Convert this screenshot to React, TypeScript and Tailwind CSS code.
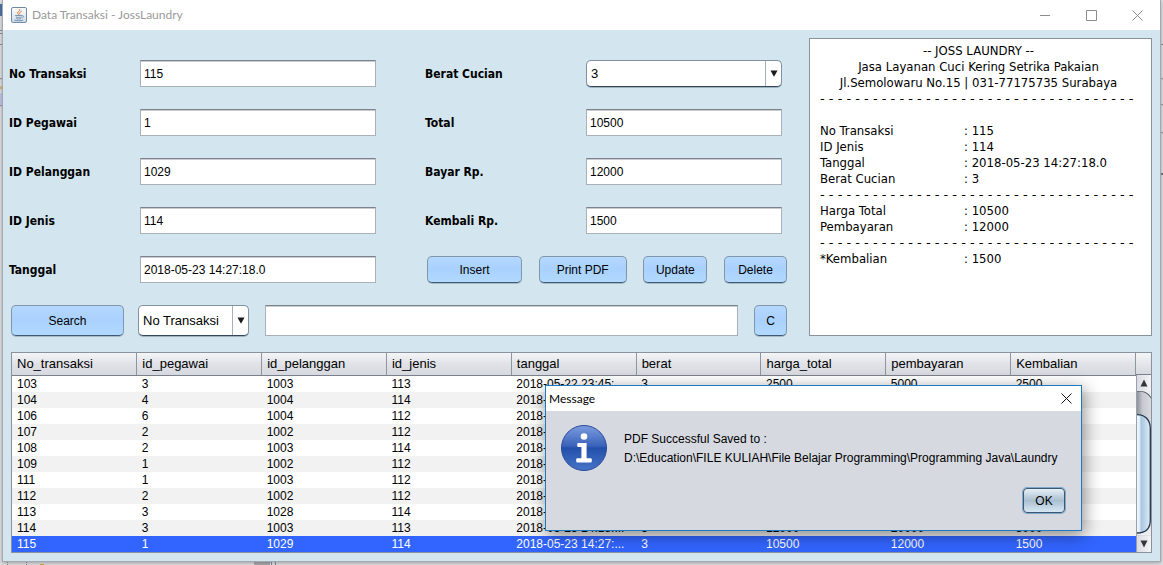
import type { ReactNode } from "react";

const ui = "font-['Liberation_Sans',Arial,sans-serif]";
const tahoma = "font-['DejaVu_Sans_Condensed','DejaVu_Sans',sans-serif]";
const segoe = "font-['Lato','Open_Sans',sans-serif]";

const columns = ["No_transaksi", "id_pegawai", "id_pelanggan", "id_jenis", "tanggal", "berat", "harga_total", "pembayaran", "Kembalian"];

const rows = [
  ["103", "3", "1003", "113", "2018-05-22 23:45:...", "3", "2500", "5000", "2500"],
  ["104", "4", "1004", "114", "2018-05-22"],
  ["106", "6", "1004", "112", "2018-05-22"],
  ["107", "2", "1002", "112", "2018-05-22"],
  ["108", "2", "1003", "114", "2018-05-22"],
  ["109", "1", "1002", "112", "2018-05-23"],
  ["111", "1", "1003", "112", "2018-05-23"],
  ["112", "2", "1002", "112", "2018-05-23"],
  ["113", "3", "1028", "114", "2018-05-23"],
  ["114", "3", "1003", "113", "2018-05-23 14:18:...", "3", "12000", "20000", "8000"],
  ["115", "1", "1029", "114", "2018-05-23 14:27:...", "3", "10500", "12000", "1500"],
];

const inputStyle =
  "min-w-0 flex-1 border border-[#a9b0b8] border-t-[#7d838c] bg-white px-[3px] text-[12px] text-black shadow-[inset_0_1px_0_#c8cbd0] outline-none";

function Field({ id, label, value }: { id: string; label: string; value: string }) {
  return (
    <div className="flex h-[27px] items-stretch">
      <Label id={id}>{label}</Label>
      <input id={id} defaultValue={value} className={inputStyle} />
    </div>
  );
}

function Label({ id, children }: { id: string; children: ReactNode }) {
  return (
    <label htmlFor={id} className={`${tahoma} flex w-[var(--label)] shrink-0 items-center text-[12px] font-bold text-black`}>
      {children}
    </label>
  );
}

function Combo({ id, options, label, className }: { id: string; options: string[]; label?: string; className: string }) {
  return (
    <div className={`relative flex overflow-hidden rounded-[5px] border border-[#8291a0] border-b-[#34475a] bg-white shadow-[0_1px_0_#9fb2c0] ${className}`}>
      <select id={id} aria-label={label} className="w-full appearance-none bg-transparent pl-1 pr-4 text-[13px] text-black outline-none">
        {options.map((o) => (
          <option key={o}>{o}</option>
        ))}
      </select>
      <span className="pointer-events-none absolute inset-y-0 right-0 flex w-4 items-center justify-center border-l border-[#a5b1bd]">
        <svg width="8" height="7" viewBox="0 0 8 7" aria-hidden="true">
          <path d="M0.5 0.5h7L4 6.8z" fill="#1b1b1f" />
        </svg>
      </span>
    </div>
  );
}

function Button({ className, children }: { className: string; children: ReactNode }) {
  return (
    <button
      type="button"
      className={`rounded-[5px] border border-[#8296ab] border-b-[#405a75] bg-linear-to-b from-[#b4d8ff] via-[#a9d1fd] to-[#b2daff] text-[12px] text-black shadow-[0_1px_0_#a6bac8] ${className}`}
    >
      {children}
    </button>
  );
}

function JavaIcon() {
  return (
    <svg width="16" height="16" viewBox="0 0 16 16" aria-hidden="true">
      <defs>
        <linearGradient id="jbg" x1="0" y1="0" x2="0" y2="1">
          <stop offset="0" stopColor="#fdfdfd" />
          <stop offset="1" stopColor="#cfdbe6" />
        </linearGradient>
      </defs>
      <rect x="0.5" y="0.5" width="15" height="15" rx="1.5" fill="url(#jbg)" stroke="#6f8ba4" />
      <path d="M9 2.4C9.6 4 6 4.800 6.600 6.200c.3.6.9.9 1.200 1.400M10.400 4.400C8.900 5 7.900 5.700 8.700 6.900" fill="none" stroke="#e8782a" strokeWidth="1" strokeLinecap="round" />
      <path d="M4.500 8.500h6M5.200 10.100c1.500.5 3.600.5 5 0M5.600 11.700c1.300.4 2.800.4 4 0M3.600 13.200c2.500.7 5.800.7 8.200 0M11 8.700c2.200-.5 2.200 1.700.2 2.100" fill="none" stroke="#5d7f9f" strokeWidth="0.800" strokeLinecap="round" />
    </svg>
  );
}

function InfoIcon() {
  return (
    <svg width="48" height="48" viewBox="0 0 48 48" aria-hidden="true">
      <defs>
        <linearGradient id="ibg" x1="0" y1="0" x2="0" y2="1">
          <stop offset="0" stopColor="#7d9de0" />
          <stop offset="0.45" stopColor="#3b63bb" />
          <stop offset="0.5" stopColor="#2350aa" />
          <stop offset="1" stopColor="#4674c8" />
        </linearGradient>
      </defs>
      <circle cx="24" cy="24" r="22.5" fill="url(#ibg)" stroke="#28489a" />
      <circle cx="24" cy="12.5" r="3.3" fill="#fff" />
      <path d="M18.400 19h8.200v15.200h4a1.200 1.200 0 0 1 1.200 1.200v1.800a1.200 1.200 0 0 1-1.200 1.200H17.400a1.200 1.200 0 0 1-1.200-1.200v-1.800a1.200 1.200 0 0 1 1.200-1.200h4V23h-3a1.200 1.200 0 0 1-1.200-1.200v-1.600A1.200 1.200 0 0 1 18.400 19z" fill="#fff" />
    </svg>
  );
}

function TitleBar() {
  return (
    <header className="flex h-[30px] items-center bg-white">
      <div className="flex flex-1 items-center gap-[5px] pl-2">
        <JavaIcon />
        <h1 className={`${segoe} text-[12px] text-[#999]`}>Data Transaksi - JossLaundry</h1>
      </div>
      <button type="button" aria-label="Minimize" className="flex h-full w-[46px] items-center justify-center">
        <svg width="11" height="11" viewBox="0 0 11 11"><path d="M0 5.5h10" stroke="#8c8c8c" /></svg>
      </button>
      <button type="button" aria-label="Maximize" className="flex h-full w-[46px] items-center justify-center">
        <svg width="11" height="11" viewBox="0 0 11 11"><path d="M.5 .5h10v10H.5z" fill="none" stroke="#8c8c8c" /></svg>
      </button>
      <button type="button" aria-label="Close" className="flex h-full w-[46px] items-center justify-center">
        <svg width="11" height="11" viewBox="0 0 11 11"><path d="M.5 .5l10 10M10.5 .5l-10 10" stroke="#8c8c8c" /></svg>
      </button>
    </header>
  );
}

function Dashes() {
  return <p className="overflow-hidden font-['DejaVu_Sans',sans-serif] text-[13px] leading-4 whitespace-nowrap">{"- ".repeat(36)}</p>;
}

function Entry({ name, value }: { name: string; value: string }) {
  return (
    <div className="flex">
      <dt className="w-[144px]">{name}</dt>
      <dd>: {value}</dd>
    </div>
  );
}

function Receipt() {
  return (
    <section className={`${tahoma} w-[343px] shrink-0 border border-[#8a929b] bg-white px-[10px] pt-1 text-[13px] leading-4 text-black`}>
      <div className="pr-1 text-center">
        <p>-- JOSS LAUNDRY --</p>
        <p>Jasa Layanan Cuci Kering Setrika Pakaian</p>
        <p>Jl.Semolowaru No.15 | 031-77175735 Surabaya</p>
      </div>
      <Dashes />
      <dl className="pt-4">
        <Entry name="No Transaksi" value="115" />
        <Entry name="ID Jenis" value="114" />
        <Entry name="Tanggal" value="2018-05-23 14:27:18.0" />
        <Entry name="Berat Cucian" value="3" />
      </dl>
      <Dashes />
      <dl>
        <Entry name="Harga Total" value="10500" />
        <Entry name="Pembayaran" value="12000" />
      </dl>
      <Dashes />
      <dl>
        <Entry name="*Kembalian" value="1500" />
      </dl>
    </section>
  );
}

function ScrollBar() {
  return (
    <div className="flex w-[15px] shrink-0 flex-col">
      <div className="h-[22px] border-b border-[#7b818a] bg-linear-to-b from-[#f4f5f7] to-[#d6d9df]" />
      <div className="flex flex-1 flex-col border-l border-[#9aa0a8] bg-linear-to-r from-[#bfc3c9] to-[#dfe1e6]">
        <button type="button" aria-label="Scroll up" className="flex h-4 items-center justify-center bg-linear-to-r from-[#d9dce1] to-[#f4f4f6]">
          <svg width="8" height="8" viewBox="0 0 8 8"><path d="M4 .5l3.500 7h-7z" fill="#33363b" /></svg>
        </button>
        <svg className="w-full flex-1" viewBox="0 0 14 144" preserveAspectRatio="none" aria-hidden="true">
          <defs>
            <linearGradient id="trk" x1="0" x2="1">
              <stop offset="0" stopColor="#8e9299" />
              <stop offset="0.4" stopColor="#c6c9cf" />
              <stop offset="1" stopColor="#d8dae0" />
            </linearGradient>
            <linearGradient id="thm" x1="0" x2="1">
              <stop offset="0" stopColor="#f2f9ff" />
              <stop offset="0.22" stopColor="#d8e9f8" />
              <stop offset="0.3" stopColor="#a9c4dc" />
              <stop offset="1" stopColor="#dcedfb" />
            </linearGradient>
          </defs>
          <path d="M0 0h14v144H0z" fill="url(#trk)" />
          <path d="M0 .5c7 0 10 1 14 7V0H0z" fill="#4c5057" />
          <path d="M3 0c6 0 9 3 11 6V0z" fill="#eceef1" />
          <path d="M0 142c7 0 13-3 13.500-13l.5 15H0z" fill="#eceef1" />
          <path d="M0 23.500c8 0 13.300 5 13.300 14v91c0 9-5 13-13.300 13z" fill="url(#thm)" />
          <path d="M0 23.500c8 0 13.300 5 13.300 14v91c0 9-5 13-13.300 13" fill="none" stroke="#26384a" strokeWidth="1.300" />
        </svg>
        <button type="button" aria-label="Scroll down" className="flex h-4 items-center justify-center bg-linear-to-r from-[#d9dce1] to-[#f4f4f6]">
          <svg width="8" height="8" viewBox="0 0 8 8"><path d="M4 7.500l3.500-7h-7z" fill="#33363b" /></svg>
        </button>
      </div>
    </div>
  );
}

function Transactions() {
  return (
    <div className="flex border border-[#8a929b] bg-white">
      <div className="min-w-0 flex-1">
        <table className="w-full table-fixed border-collapse text-left text-black">
          <thead>
            <tr className="h-[22px] bg-linear-to-b from-[#f4f5f7] via-[#e0e2e7] to-[#d6d9df] text-[13px]">
              {columns.map((c) => (
                <th key={c} scope="col" className="border-r border-b border-r-[#8f959e] border-b-[#7b818a] p-0 pl-[5px] font-normal">
                  {c}
                </th>
              ))}
            </tr>
          </thead>
          <tbody className="text-[12px]">
            {rows.map((r) => (
              <tr key={r[0]} className={r[0] === "115" ? "h-4 bg-[#3265ff] text-white" : "h-4 even:bg-[#f2f2f2]"}>
                {columns.map((c, i) => (
                  <td key={c} className="overflow-hidden p-0 pl-[5px] leading-4 whitespace-nowrap">
                    {r[i]}
                  </td>
                ))}
              </tr>
            ))}
          </tbody>
        </table>
      </div>
      <ScrollBar />
    </div>
  );
}

function MessageDialog() {
  return (
    <div
      role="dialog"
      aria-labelledby="message-title"
      className="absolute top-[385px] left-[542px] w-[537px] border border-[#1d7ac2] bg-[#d6d9e0] text-[12px] text-black shadow-[2px_4px_16px_rgba(0,0,0,0.45)]"
    >
      <div className="flex h-[25px] items-center justify-between bg-white pl-[3px]">
        <h2 id="message-title" className={`${segoe} text-[12px]`}>Message</h2>
        <button type="button" aria-label="Close message" className="flex h-full w-[30px] items-center justify-center">
          <svg width="11" height="11" viewBox="0 0 11 11"><path d="M.5 .5l10 10M10.500 .5l-10 10" stroke="#111" /></svg>
        </button>
      </div>
      <div className="flex items-start gap-4 pt-[13px] pl-[14px]">
        <InfoIcon />
        <p className="pt-[6px] text-[12px] leading-[19px] whitespace-nowrap">
          PDF Successful Saved to :
          <br />
          D:\Education\FILE KULIAH\File Belajar Programming\Programming Java\Laundry
        </p>
      </div>
      <div className="flex justify-end pt-4 pr-4 pb-[17px]">
        <button
          type="button"
          className="h-[25px] w-[42px] rounded-[4px] border border-[#3c5872] bg-linear-to-b from-[#e6f0f7] via-[#a9bfd0] to-[#d7e8f4] text-[12px] shadow-[0_0_0_1px_#7fa9cc]"
        >
          OK
        </button>
      </div>
    </div>
  );
}

function LeftEdge() {
  return (
    <svg className="w-[2px] shrink-0" viewBox="0 0 2 560" preserveAspectRatio="xMinYMin slice" aria-hidden="true">
      <path d="M0 4h2v12H0z" fill="#4f74ae" />
      <path d="M0 30h2v1H0zM0 33h2v1H0zM0 44h2v1H0zM0 78h2v1H0z" fill="#8b8e94" />
      <path d="M0 86h2v3H0z" fill="#e0b878" />
      <path d="M0 93h2v12H0z" fill="#c2c8ea" />
      <path d="M0 105h2v1H0z" fill="#8b8e94" />
    </svg>
  );
}

function RightEdge() {
  return (
    <svg className="w-[2px] shrink-0" viewBox="0 0 2 560" preserveAspectRatio="xMinYMin slice" aria-hidden="true">
      <path d="M0 44h2v1H0zM0 78h2v1H0zM0 104h2v1H0zM0 132h2v1H0z" fill="#8b8e94" />
      <path d="M0 173h2v1H0z" fill="#111" />
    </svg>
  );
}

function BottomEdge() {
  return (
    <svg className="block h-1 w-full" viewBox="0 0 1163 4" preserveAspectRatio="xMinYMin slice" aria-hidden="true">
      <path d="M7.500 0v4M26.500 0v4" stroke="#8b8e94" strokeDasharray="1 1" />
      <path d="M40 2h4v2h-4z" fill="#d9a640" />
      <path d="M254 0h16v4h-16z" fill="#a9abae" />
      <path d="M271.500 0v4M275.500 0v4" stroke="#7d8ea8" />
    </svg>
  );
}

export default function App() {
  return (
    <div className={`${ui} min-h-screen bg-[#dfe1e4]`}>
      <div className="flex">
        <LeftEdge />
        <div className="relative min-w-0 flex-1 border-r border-b border-l border-[#a3a9ae] bg-[#d3e5ee] shadow-[0_1px_4px_rgba(0,0,0,0.3)]">
          <TitleBar />
          <main className="flex flex-col gap-4 p-2">
            <div className="flex gap-[22px]">
              <div className="flex min-w-0 flex-1 flex-col gap-[22px] pt-[22px]">
                <form className="-ml-[2px] flex gap-[49px]">
                  <div className="flex flex-1 flex-col gap-[22px] [--label:131px]">
                    <Field id="no" label="No Transaksi" value="115" />
                    <Field id="pegawai" label="ID Pegawai" value="1" />
                    <Field id="pelanggan" label="ID Pelanggan" value="1029" />
                    <Field id="jenis" label="ID Jenis" value="114" />
                    <Field id="tanggal" label="Tanggal" value="2018-05-23 14:27:18.0" />
                  </div>
                  <div className="flex w-[362px] flex-col gap-[22px] [--label:161px]">
                    <div className="flex h-[27px] pr-[5px]">
                      <Label id="berat">Berat Cucian</Label>
                      <Combo id="berat" options={["3"]} className="flex-1" />
                    </div>
                    <div className="flex flex-col gap-[22px] pr-[5px]">
                      <Field id="total" label="Total" value="10500" />
                      <Field id="bayar" label="Bayar Rp." value="12000" />
                      <Field id="kembali" label="Kembali Rp." value="1500" />
                    </div>
                    <div className="flex h-[27px] justify-between pl-[2px]">
                      <Button className="w-[95px]">Insert</Button>
                      <Button className="w-[88px]">Print PDF</Button>
                      <Button className="w-[64px]">Update</Button>
                      <Button className="w-[63px]">Delete</Button>
                    </div>
                  </div>
                </form>
                <div className="flex h-[31px] gap-4">
                  <div className="flex gap-[14px]">
                    <Button className="w-[113px]">Search</Button>
                    <Combo id="search-by" label="Search by" options={["No Transaksi"]} className="w-[111px]" />
                  </div>
                  <input aria-label="Search text" className={inputStyle} />
                  <Button className="w-[33px]">C</Button>
                </div>
              </div>
              <Receipt />
            </div>
            <Transactions />
          </main>
          <MessageDialog />
        </div>
        <RightEdge />
      </div>
      <BottomEdge />
    </div>
  );
}
